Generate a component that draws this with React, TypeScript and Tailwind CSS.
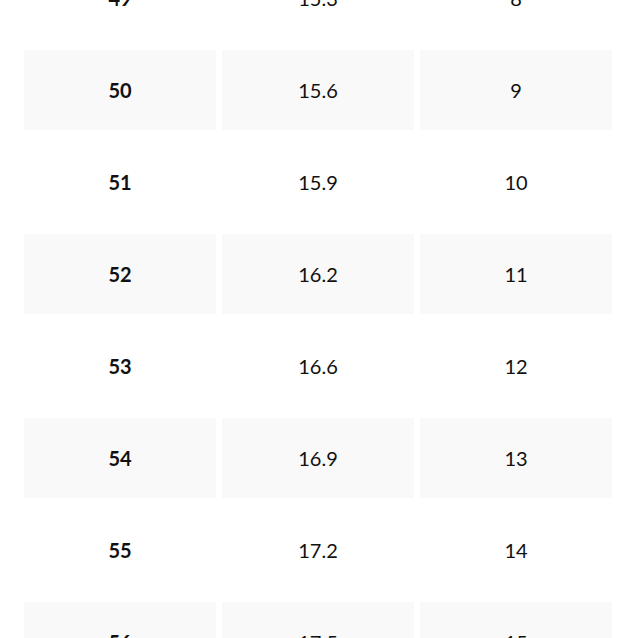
const rows = [
  { size: "49", cm: "15.3", us: "8" },
  { size: "50", cm: "15.6", us: "9" },
  { size: "51", cm: "15.9", us: "10" },
  { size: "52", cm: "16.2", us: "11" },
  { size: "53", cm: "16.6", us: "12" },
  { size: "54", cm: "16.9", us: "13" },
  { size: "55", cm: "17.2", us: "14" },
  { size: "56", cm: "17.5", us: "15" },
]

export default function App() {
  return (
    <div className="w-[638px] h-[638px] overflow-hidden bg-white font-['Lato',sans-serif] text-[#111]">
      <div className="mt-[-42px] ml-[24px] w-[588px] flex flex-col gap-3">
        {rows.map((row, i) => {
          const cell = i % 2 === 1 ? "bg-[#f9f9f9]" : "bg-white"
          return (
            <div key={row.size} className="grid grid-cols-3 gap-[6px]">
              <div className={`h-[80px] flex items-center justify-center text-[20px] font-bold ${cell}`}>
                {row.size}
              </div>
              <div className={`h-[80px] flex items-center justify-center text-[20px] ${cell}`}>
                {row.cm}
              </div>
              <div className={`h-[80px] flex items-center justify-center text-[20px] ${cell}`}>
                {row.us}
              </div>
            </div>
          )
        })}
      </div>
    </div>
  )
}
